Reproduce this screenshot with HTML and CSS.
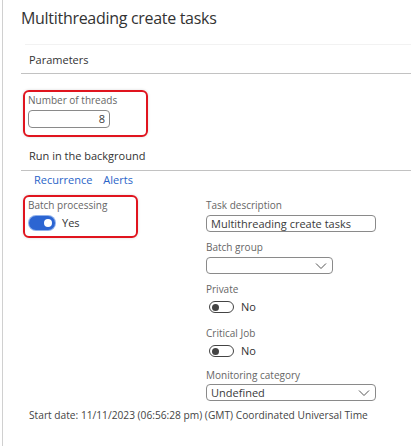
FILE: index.html
```html
<!DOCTYPE html>
<html>
<head>
<meta charset="utf-8">
<link rel="stylesheet" href="styles.css">
</head>
<body>
<div class="page">
  <h1 class="title">Multithreading create tasks</h1>
  <div class="faint"></div>
  <div class="section-head">Parameters</div>
  <div class="params">
    <div class="hl hl-threads">
      <div class="label">Number of threads</div>
      <div class="input num">8</div>
    </div>
  </div>
  <div class="section-head bg-head">Run in the background</div>
  <div class="links"><span class="link">Recurrence</span><span class="link">Alerts</span></div>
  <div class="cols">
    <div class="col-left">
      <div class="hl hl-batch">
        <div class="label">Batch processing</div>
        <div class="toggle-row big">
          <span class="toggle on"><span class="knob"></span></span>
          <span class="tval">Yes</span>
        </div>
      </div>
    </div>
    <div class="col-right">
      <div class="field f-input">
        <div class="label">Task description</div>
        <div class="input wide">Multithreading create tasks</div>
      </div>
      <div class="field f-input">
        <div class="label">Batch group</div>
        <div class="input select short"><span></span>
          <svg class="chev" width="12" height="8" viewBox="0 0 12 8"><path d="M1 1.5 L6 6.5 L11 1.5" fill="none" stroke="#555" stroke-width="1"/></svg>
        </div>
      </div>
      <div class="field f-toggle">
        <div class="label">Private</div>
        <div class="toggle-row small">
          <span class="toggle off"><span class="knob"></span></span>
          <span class="tval">No</span>
        </div>
      </div>
      <div class="field f-toggle2">
        <div class="label">Critical Job</div>
        <div class="toggle-row small">
          <span class="toggle off"><span class="knob"></span></span>
          <span class="tval">No</span>
        </div>
      </div>
      <div class="field f-last">
        <div class="label">Monitoring category</div>
        <div class="input select wide"><span>Undefined</span>
          <svg class="chev" width="12" height="8" viewBox="0 0 12 8"><path d="M1 1.5 L6 6.5 L11 1.5" fill="none" stroke="#555" stroke-width="1"/></svg>
        </div>
      </div>
    </div>
  </div>
  <div class="footer">Start date: 11/11/2023 (06:56:28 pm) (GMT) Coordinated Universal Time</div>
</div>
</body>
</html>
```
FILE: styles.css
```css
html, body {
  margin: 0;
  padding: 0;
  background: #fff;
}
body {
  font-family: "Open Sans", "Noto Sans", sans-serif;
  color: #333;
  width: 411px;
  height: 446px;
  overflow: hidden;
}
.page {
  margin-left: 2px;
  border-left: 1px solid #d0d0d0;
  height: 446px;
  padding-left: 18px;
  box-sizing: border-box;
}
.title {
  margin: 0;
  padding-top: 7px;
  font-size: 16px;
  font-weight: 400;
  color: #333;
  line-height: 22px;
  letter-spacing: -0.3px;
}
.faint {
  margin: 15px 0 0 4px;
  height: 1px;
  background: #f2f2f2;
}
.section-head {
  font-size: 11px;
  color: #333;
  padding: 8px 0 0 8px;
  line-height: 14px;
  border-bottom: 1px solid #c2c2c2;
  box-sizing: border-box;
  height: 29px;
}
.params {
  padding: 16px 0 0 2px;
}
.hl {
  border: 2px solid #e0141e;
  border-radius: 6px;
  box-shadow: 0 0 3px rgba(0,0,0,0.15);
  padding: 2px 4px 0 3px;
  box-sizing: border-box;
}
.hl-threads {
  width: 125px;
  height: 47px;
}
.label {
  font-size: 10px;
  color: #666;
  line-height: 13px;
}
.input {
  border: 1px solid #8a8a8a;
  border-radius: 4px;
  height: 17px;
  box-sizing: border-box;
  font-size: 11px;
  line-height: 15px;
  color: #3a3a3a;
  padding: 0 4px;
}
.num {
  width: 82px;
  height: 18px;
  line-height: 16px;
  margin-top: 3px;
  text-align: right;
  padding-right: 4px;
}
.bg-head {
  padding-top: 12px;
  height: 34px;
}
.links {
  padding: 2px 0 0 13px;
  font-size: 11px;
  line-height: 14px;
  display: flex;
  gap: 11px;
}
.link {
  color: #2a64c8;
}
.cols {
  display: flex;
  padding: 8px 0 0 2px;
}
.col-left {
  width: 183px;
}
.hl-batch {
  width: 115px;
  height: 43px;
}
.toggle-row {
  display: flex;
  align-items: center;
  gap: 7px;
  margin-left: 1px;
}
.toggle-row.big {
  margin-top: 4px;
}
.toggle {
  display: inline-block;
  position: relative;
  box-sizing: border-box;
  flex: none;
}
.toggle.on {
  width: 26px;
  height: 14px;
  border-radius: 7px;
  background: #2c65d2;
  box-shadow: 0 0 0 1px #8fb1ec;
}
.toggle.on .knob {
  position: absolute;
  right: 3px;
  top: 3px;
  width: 8px;
  height: 8px;
  border-radius: 50%;
  background: #fff;
}
.toggle.off {
  width: 25px;
  height: 12px;
  border-radius: 6px;
  border: 1px solid #444;
  background: #fff;
}
.toggle.off .knob {
  position: absolute;
  left: 2px;
  top: 1.5px;
  width: 7px;
  height: 7px;
  border-radius: 50%;
  background: #444;
}
.tval {
  font-size: 11px;
  color: #333;
  line-height: 14px;
}
.col-right {
  display: flex;
  flex-direction: column;
  padding-top: 4px;
}
.field .label {
  margin-bottom: 3px;
}
.f-input {
  margin-bottom: 9px;
}
.f-toggle {
  margin-bottom: 14px;
}
.f-toggle2 {
  margin-bottom: 12px;
}
.f-toggle .label,
.f-toggle2 .label {
  margin-bottom: 5px;
}
.f-last .label {
  margin-bottom: 2px;
}
.toggle-row.small {
  margin-left: 3px;
  height: 12px;
}
.wide {
  width: 170px;
}
.short {
  width: 127px;
}
.select {
  display: flex;
  align-items: center;
  justify-content: space-between;
  padding-right: 5px;
}
.chev {
  display: block;
}
.footer {
  font-size: 10.2px;
  color: #444;
  padding: 8px 0 0 8px;
  line-height: 13px;
}
```
